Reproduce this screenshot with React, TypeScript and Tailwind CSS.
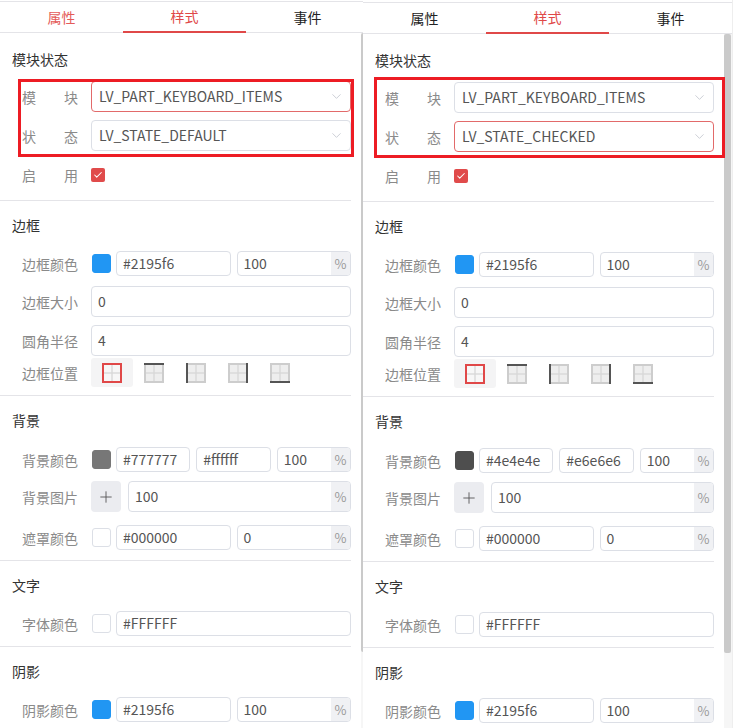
import React from 'react';
import { ChevronDown, Check, Plus } from 'lucide-react';

type Side = 'all' | 'top' | 'left' | 'right' | 'bottom';

const Label = ({ text }: { text: string }) => {
  const chars = text.split('');
  return (
    <div className="mr-[13px] flex w-[56px] shrink-0 justify-between text-[14px] leading-[20px] text-[#8a8a8a]">
      {chars.length === 2 ? (
        <>
          <span>{chars[0]}</span>
          <span>{chars[1]}</span>
        </>
      ) : (
        <span>{text}</span>
      )}
    </div>
  );
};

const Field = ({ value, percent, tall }: { value: string; percent?: boolean; tall?: boolean }) => (
  <div
    className={`flex min-w-0 flex-1 items-center rounded-[4px] border border-[#dcdfe6] bg-white ${
      tall ? 'h-[31px]' : 'h-[25px]'
    }`}
  >
    <span className="px-[6px] text-[14px] text-[#555]">{value}</span>
    {percent && (
      <span className="ml-auto flex h-full w-[19px] items-center justify-center rounded-r-[3px] bg-[#f0f1f4] text-[13px] text-[#9a9a9a]">
        %
      </span>
    )}
  </div>
);

const Swatch = ({ color }: { color: string }) => (
  <div
    className="ml-[1px] mr-[5px] h-[19px] w-[19px] shrink-0 rounded-[3px] border"
    style={{ backgroundColor: color, borderColor: color === '#ffffff' ? '#dcdfe6' : color }}
  />
);

const Select = ({ value, active }: { value: string; active?: boolean }) => (
  <div
    className={`flex h-[31px] flex-1 items-center justify-between rounded-[4px] border bg-white pl-[7px] pr-[6px] ${
      active ? 'border-[#e26a6a]' : 'border-[#dcdfe6]'
    }`}
  >
    <span className="text-[14px] text-[#555]">{value}</span>
    <ChevronDown size={15} strokeWidth={1.3} className="text-[#c0c4cc]" />
  </div>
);

const BorderIcon = ({ side }: { side: Side }) => (
  <svg width="20" height="20" viewBox="0 0 20 20">
    <rect
      x="1"
      y="1"
      width="18"
      height="18"
      fill={side === 'all' ? '#f7f7f7' : '#eeeeee'}
      stroke={side === 'all' ? '#e04848' : '#cdcdcd'}
      strokeWidth="2"
    />
    <line x1="10" y1="2" x2="10" y2="18" stroke="#d9d9d9" strokeWidth="1.4" />
    <line x1="2" y1="10" x2="18" y2="10" stroke="#d9d9d9" strokeWidth="1.4" />
    {side === 'top' && <line x1="0" y1="1" x2="20" y2="1" stroke="#555" strokeWidth="2" />}
    {side === 'left' && <line x1="1" y1="0" x2="1" y2="20" stroke="#555" strokeWidth="2" />}
    {side === 'right' && <line x1="19" y1="0" x2="19" y2="20" stroke="#555" strokeWidth="2" />}
    {side === 'bottom' && <line x1="0" y1="19" x2="20" y2="19" stroke="#555" strokeWidth="2" />}
  </svg>
);

const Heading = ({ text }: { text: string }) => (
  <div className="pl-[12px] text-[14px] leading-[20px] text-[#333]">{text}</div>
);

const Divider = () => <div className="h-px bg-[#e4e4e8]" />;

const ColorRow = ({ label, color, values }: { label: string; color: string; values: string[] }) => (
  <div className="flex items-center pl-[22px]">
    <Label text={label} />
    <Swatch color={color} />
    <div className="flex flex-1 gap-[6px]">
      {values.map((v, i) => (
        <Field key={i} value={v} percent={values.length > 1 && i === values.length - 1} />
      ))}
    </div>
  </div>
);

type PanelProps = {
  firstTabRed: boolean;
  partActive: boolean;
  stateActive: boolean;
  state: string;
  bg1: string;
  bg2: string;
  box: string;
};

const Panel = ({ firstTabRed, partActive, stateActive, state, bg1, bg2, box }: PanelProps) => {
  const tabs = ['属性', '样式', '事件'];
  return (
    <div className="relative flex h-[728px] w-[369px] shrink-0 flex-col bg-white">
      <div className="mt-[1px] flex h-[32px] border-y border-[#e4e4e8]">
        {tabs.map((t, i) => (
          <div
            key={t}
            className={`flex w-[123px] items-center justify-center text-[14px] ${
              i === 1
                ? '-mb-px border-b-2 border-[#e04848] text-[#e04848]'
                : i === 0 && firstTabRed
                ? 'text-[#e45a58]'
                : 'text-[#222]'
            }`}
          >
            {t}
          </div>
        ))}
      </div>

      <div className="flex min-h-0 flex-1">
        <div className="w-[361px] pr-[10px]">
          <div className="mt-[16px]">
            <Heading text="模块状态" />
          </div>
          <div className="mt-[12px] flex items-center pl-[22px]">
            <Label text="模块" />
            <Select value="LV_PART_KEYBOARD_ITEMS" active={partActive} />
          </div>
          <div className="mt-[8px] flex items-center pl-[22px]">
            <Label text="状态" />
            <Select value={state} active={stateActive} />
          </div>
          <div className="mt-[8px] flex h-[31px] items-center pl-[22px]">
            <Label text="启用" />
            <div className="flex h-[14px] w-[14px] items-center justify-center rounded-[2px] bg-[#e04b4b]">
              <Check size={10} strokeWidth={2.5} className="text-white" />
            </div>
          </div>

          <div className="mt-[10px]">
            <Divider />
          </div>
          <div className="mt-[14px]">
            <Heading text="边框" />
          </div>
          <div className="mt-[16px]">
            <ColorRow label="边框颜色" color="#2196f3" values={['#2195f6', '100']} />
          </div>
          <div className="mt-[10px] flex items-center pl-[22px]">
            <Label text="边框大小" />
            <Field value="0" tall />
          </div>
          <div className="mt-[8px] flex items-center pl-[22px]">
            <Label text="圆角半径" />
            <Field value="4" tall />
          </div>
          <div className="mt-[2px] flex items-center pl-[22px]">
            <Label text="边框位置" />
            {(['all', 'top', 'left', 'right', 'bottom'] as Side[]).map((s) => (
              <div
                key={s}
                className={`flex h-[29px] w-[42px] items-center justify-center rounded-[3px] ${
                  s === 'all' ? 'bg-[#f4f4f5]' : ''
                }`}
              >
                <BorderIcon side={s} />
              </div>
            ))}
          </div>

          <div className="mt-[8px]">
            <Divider />
          </div>
          <div className="mt-[14px]">
            <Heading text="背景" />
          </div>
          <div className="mt-[17px]">
            <ColorRow label="背景颜色" color={bg1} values={[bg1, bg2, '100']} />
          </div>
          <div className="mt-[9px] flex items-center pl-[22px]">
            <Label text="背景图片" />
            <div className="mr-[7px] flex h-[31px] w-[30px] shrink-0 items-center justify-center rounded-[4px] bg-[#ebecf0]">
              <Plus size={18} strokeWidth={1.2} className="text-[#555]" />
            </div>
            <Field value="100" percent tall />
          </div>
          <div className="mt-[13px]">
            <ColorRow label="遮罩颜色" color="#ffffff" values={['#000000', '0']} />
          </div>

          <div className="mt-[10px]">
            <Divider />
          </div>
          <div className="mt-[14px]">
            <Heading text="文字" />
          </div>
          <div className="mt-[16px]">
            <ColorRow label="字体颜色" color="#ffffff" values={['#FFFFFF']} />
          </div>

          <div className="mt-[10px]">
            <Divider />
          </div>
          <div className="mt-[14px]">
            <Heading text="阴影" />
          </div>
          <div className="mt-[16px]">
            <ColorRow label="阴影颜色" color="#2196f3" values={['#2195f6', '100']} />
          </div>
        </div>

        <div className="w-[8px] bg-[#f6f6f6]">
          <div className="h-[619px] w-[7px] rounded-[2px] bg-[#cacaca]" />
        </div>
      </div>

      <div className={`pointer-events-none absolute border-[3px] border-[#ed1c24] ${box}`} />
    </div>
  );
};

export default function App() {
  return (
    <div className="flex h-[728px] w-[733px] overflow-hidden bg-white font-['Noto_Sans_CJK_SC',sans-serif]">
      <div className="w-[363px] shrink-0 overflow-hidden">
        <Panel
          firstTabRed
          partActive
          stateActive={false}
          state="LV_STATE_DEFAULT"
          bg1="#777777"
          bg2="#ffffff"
          box="left-[18px] top-[79px] h-[78px] w-[336px]"
        />
      </div>
      <div className="mt-[1px] shrink-0">
        <Panel
          firstTabRed={false}
          partActive={false}
          stateActive
          state="LV_STATE_CHECKED"
          bg1="#4e4e4e"
          bg2="#e6e6e6"
          box="left-[11px] top-[76px] h-[81px] w-[351px]"
        />
      </div>
      <div className="w-[1px] bg-[#eeeeee]" />
    </div>
  );
}
